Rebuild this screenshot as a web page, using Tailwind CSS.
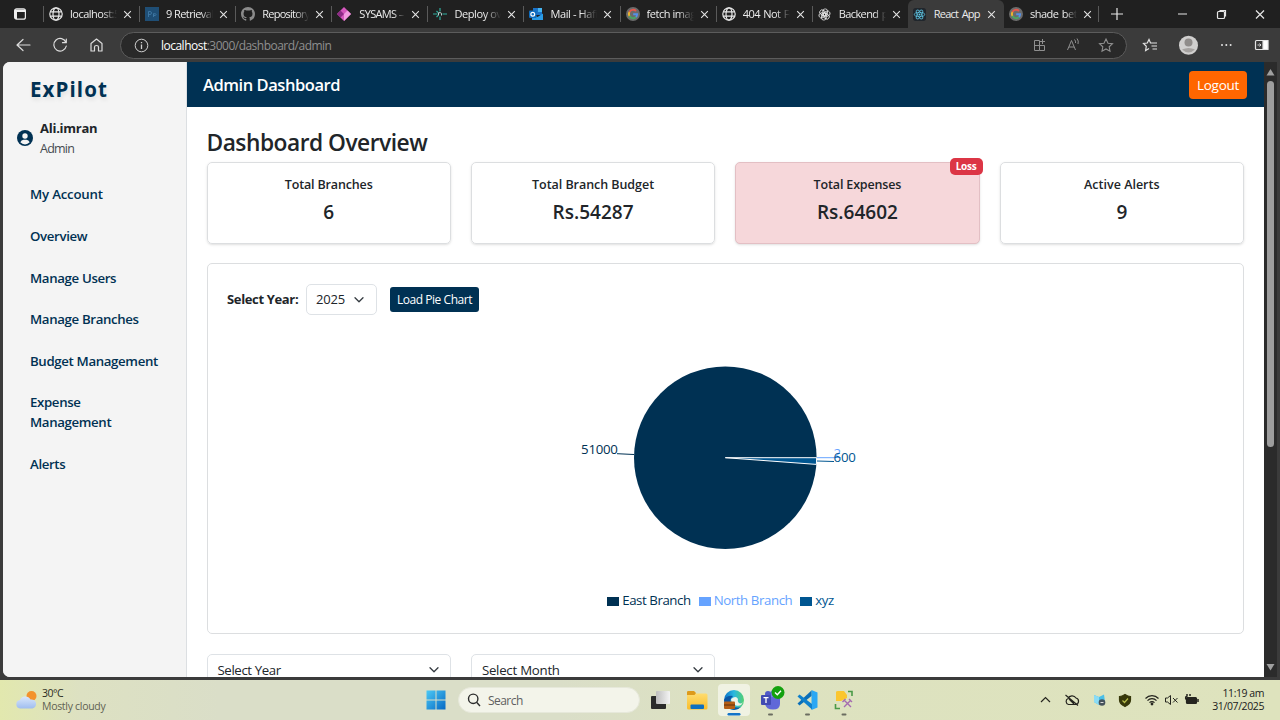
<!DOCTYPE html>
<html lang="en">
<head>
<meta charset="utf-8">
<title>React App</title>
<script src="https://cdn.jsdelivr.net/npm/@tailwindcss/browser@4"></script>
</head>
<body class="w-[1280px] h-[720px] overflow-hidden bg-[#3b3b3b] font-['Open_Sans',sans-serif] text-[#212529] flex flex-col whitespace-nowrap">

<svg class="hidden">
  <defs>
    <symbol id="close" viewBox="0 0 10 10"><path d="M1.3 1.3 8.7 8.7M8.7 1.3 1.3 8.7" stroke="#e4e4e4" stroke-width="1.2" fill="none"/></symbol>
    <symbol id="globe" viewBox="0 0 14 14"><g fill="none" stroke="#e8e8e8" stroke-width="1.2"><circle cx="7" cy="7" r="6.2"/><ellipse cx="7" cy="7" rx="3" ry="6.2"/><path d="M1.3 4.8H12.7M1.3 9.2H12.7"/></g></symbol>
    <symbol id="google" viewBox="0 0 14 14"><circle cx="7" cy="7" r="7" fill="#6b6b6b"/><g fill="none" stroke-width="1.9"><path d="M3.4 5A4.2 4.2 0 0 1 10 4" stroke="#e5574c"/><path d="M3.4 9A4.2 4.2 0 0 1 3.4 5" stroke="#efb52e"/><path d="M10 10A4.2 4.2 0 0 1 3.4 9" stroke="#4aa563"/><path d="M7.2 7.2H11.1A4.2 4.2 0 0 1 10 10" stroke="#5590e8"/></g></symbol>
    <symbol id="chev" viewBox="0 0 12 8"><path d="M2 1.700 6 5.700 10 1.700" fill="none" stroke="#343a40" stroke-width="1.3" stroke-linecap="round" stroke-linejoin="round"/></symbol>
  </defs>
</svg>

<!-- Tab strip -->
<div class="h-7 shrink-0 bg-[#202020] flex items-center text-[11px] text-[#ececec]">
  <div class="w-[43px] shrink-0 pl-[14px]"><svg class="size-3" viewBox="0 0 12 12"><rect x=".6" y=".8" width="10.8" height="10.4" rx="2" fill="none" stroke="#eee" stroke-width="1.2"/><path d="M1 1.5H11V4H1zM1 4H3V11H1z" fill="#eee"/></svg></div>
  <div class="w-[96.100px] h-4 shrink-0 border-l border-[#5a5a5a] pl-[5px] flex items-center"><svg class="size-[14px] shrink-0"><use href="#globe"/></svg><span class="ml-[7px] w-[47px] overflow-hidden tracking-[-0.5px] mask-r-from-70%">localhost:5</span><svg class="size-[9px] ml-[6px] shrink-0"><use href="#close"/></svg></div>
  <div class="w-[96.100px] h-4 shrink-0 border-l border-[#5a5a5a] pl-[5px] flex items-center"><svg class="size-[14px] shrink-0" viewBox="0 0 14 14"><path fill="#1f4e75" d="M0 0h14v14H0z"/><path d="M3.500 10V4.500H5Q6.500 4.500 6.500 6T5 7.500H3.500M8.500 10V6.500M8.500 7Q11 6 11 7.500T8.500 8.500" fill="none" stroke="#3f78a5" stroke-width=".9"/></svg><span class="ml-[7px] w-[47px] overflow-hidden tracking-[-0.6px] mask-r-from-75%">9 Retrieval</span><svg class="size-[9px] ml-[6px] shrink-0"><use href="#close"/></svg></div>
  <div class="w-[96.100px] h-4 shrink-0 border-l border-[#5a5a5a] pl-[5px] flex items-center"><svg class="size-[14px] shrink-0" viewBox="0 0 16 16"><path fill="#8b8b8b" d="M8 0C3.580 0 0 3.580 0 8c0 3.540 2.290 6.530 5.470 7.590.4.070.550-.170.550-.380 0-.190-.010-.820-.010-1.490-2.010.370-2.530-.490-2.690-.940-.090-.230-.480-.940-.820-1.130-.280-.150-.680-.520-.010-.530.630-.010 1.080.580 1.230.820.720 1.210 1.870.870 2.330.660.070-.520.280-.870.510-1.070-1.780-.2-3.640-.890-3.640-3.950 0-.870.310-1.590.820-2.150-.080-.2-.360-1.020.080-2.120 0 0 .670-.210 2.200.820a7.600 7.600 0 0 1 4 0c1.530-1.040 2.200-.820 2.200-.820.440 1.100.160 1.920.080 2.120.510.560.820 1.270.820 2.150 0 3.070-1.870 3.750-3.650 3.950.290.250.540.730.540 1.480 0 1.070-.010 1.930-.010 2.200 0 .210.150.460.550.380A8 8 0 0 0 16 8c0-4.420-3.580-8-8-8z"/></svg><span class="ml-[7px] w-[47px] overflow-hidden tracking-[-0.75px] mask-r-from-70%">Repository</span><svg class="size-[9px] ml-[6px] shrink-0"><use href="#close"/></svg></div>
  <div class="w-[96.100px] h-4 shrink-0 border-l border-[#5a5a5a] pl-[5px] flex items-center"><svg class="size-[14px] shrink-0" viewBox="0 0 14 14"><path fill="#d556bd" d="M7 0 14 7 7 14 0 7z"/><path fill="#8d2a86" d="M7 0 3.500 3.500 7 7 3.500 10.500 0 7z"/><path fill="#f19be0" d="M7 7 10.500 3.500 14 7 7 14z"/></svg><span class="ml-[8px] w-[46px] overflow-hidden tracking-[-0.65px] mask-r-from-75%">SYSAMS – A</span><svg class="size-[9px] ml-[6px] shrink-0"><use href="#close"/></svg></div>
  <div class="w-[96.100px] h-4 shrink-0 border-l border-[#5a5a5a] pl-[5px] flex items-center"><svg class="size-[14px] shrink-0" viewBox="0 0 14 14"><path d="M0 7H4.500M9.500 7H14M7 1V4.500M7 9.500V13M3.500 4 5 5.500M3.500 10 5 8.500" stroke="#2fae9f" stroke-width="1.200"/><path d="M5.500 8.500V5.700H7.300Q8.500 5.700 8.500 6.700V8.500" stroke="#cfe8e4" stroke-width=".9" fill="none"/></svg><span class="ml-[7px] w-[47px] overflow-hidden tracking-[-0.4px] mask-r-from-65%">Deploy ove</span><svg class="size-[9px] ml-[6px] shrink-0"><use href="#close"/></svg></div>
  <div class="w-[96.100px] h-4 shrink-0 border-l border-[#5a5a5a] pl-[5px] flex items-center"><svg class="size-[14px] shrink-0" viewBox="0 0 14 14"><path fill="#1a73c9" d="M4 1h9v7H4z"/><path fill="#46b5f1" d="M9 1h4v4H9z"/><path fill="#2a9be6" d="M3 7 8.500 10 14 6.500V13H3z"/><rect y="3.500" width="7.500" height="7.500" rx="1" fill="#0f6cbd"/><circle cx="3.750" cy="7.250" r="1.900" fill="none" stroke="#fff" stroke-width="1.200"/></svg><span class="ml-[7px] w-[47px] overflow-hidden tracking-[-0.4px] mask-r-from-65%">Mail - Hafi</span><svg class="size-[9px] ml-[6px] shrink-0"><use href="#close"/></svg></div>
  <div class="w-[96.100px] h-4 shrink-0 border-l border-[#5a5a5a] pl-[5px] flex items-center"><svg class="size-[14px] shrink-0"><use href="#google"/></svg><span class="ml-[7px] w-[47px] overflow-hidden tracking-[-0.45px] mask-r-from-65%">fetch imag</span><svg class="size-[9px] ml-[6px] shrink-0"><use href="#close"/></svg></div>
  <div class="w-[96.100px] h-4 shrink-0 border-l border-[#5a5a5a] pl-[5px] flex items-center"><svg class="size-[14px] shrink-0"><use href="#globe"/></svg><span class="ml-[7px] w-[47px] overflow-hidden tracking-[-0.55px] [word-spacing:1px] mask-r-from-70%">404 Not Fo</span><svg class="size-[9px] ml-[6px] shrink-0"><use href="#close"/></svg></div>
  <div class="w-[96.100px] h-4 shrink-0 border-l border-[#5a5a5a] pl-[5px] flex items-center"><svg class="size-[13px] shrink-0" viewBox="-7 -7 14 14"><g fill="none" stroke="#e6e6e6" stroke-width=".9"><rect x="-1.800" y="-6" width="5" height="7.500" rx="2.300"/><rect x="-1.800" y="-6" width="5" height="7.500" rx="2.300" transform="rotate(60)"/><rect x="-1.800" y="-6" width="5" height="7.500" rx="2.300" transform="rotate(120)"/><rect x="-1.800" y="-6" width="5" height="7.500" rx="2.300" transform="rotate(180)"/><rect x="-1.800" y="-6" width="5" height="7.500" rx="2.300" transform="rotate(240)"/><rect x="-1.800" y="-6" width="5" height="7.500" rx="2.300" transform="rotate(300)"/></g></svg><span class="ml-2 w-[47px] overflow-hidden tracking-[-0.6px] [word-spacing:1px] mask-r-from-75%">Backend p</span><svg class="size-[9px] ml-[6px] shrink-0"><use href="#close"/></svg></div>
  <div class="w-[96.100px] h-7 shrink-0 bg-[#3b3b3b] rounded-t-[6px] pl-[5px] flex items-center"><svg class="size-[13px] shrink-0" viewBox="0 0 14 14"><rect width="14" height="14" rx="3" fill="#20262c"/><g fill="none" stroke="#5fc9e8" stroke-width=".8"><ellipse cx="7" cy="7" rx="5.600" ry="2.200"/><ellipse cx="7" cy="7" rx="5.600" ry="2.200" transform="rotate(60 7 7)"/><ellipse cx="7" cy="7" rx="5.600" ry="2.200" transform="rotate(120 7 7)"/></g><circle cx="7" cy="7" r="1" fill="#5fc9e8"/></svg><span class="ml-2 w-[47px] tracking-[-0.8px] [word-spacing:1.500px]">React App</span><svg class="size-[9px] ml-[6px] shrink-0"><use href="#close"/></svg></div>
  <div class="w-[95px] h-4 shrink-0 border-r border-[#5a5a5a] pl-[5px] flex items-center"><svg class="size-[14px] shrink-0"><use href="#google"/></svg><span class="ml-[7px] w-[47px] overflow-hidden tracking-[-0.5px] [word-spacing:1px] mask-r-from-75%">shade betw</span><svg class="size-[9px] ml-[6px] shrink-0"><use href="#close"/></svg></div>
  <svg class="w-[180px] h-7 shrink-0" viewBox="1100 0 180 28" fill="none" stroke="#e6e6e6" stroke-width="1.200"><path d="M1112 14H1124M1118 8V20M1179 14H1188"/><rect x="1218.500" y="11.500" width="7" height="7" rx="1"/><path d="M1220.500 10.500H1226.500V16.500"/><path d="M1257 10.500 1265 18.500M1265 10.500 1257 18.500"/></svg>
</div>

<!-- Toolbar -->
<div class="h-[34px] shrink-0 flex items-center text-[12px]">
  <svg class="w-[120px] h-[34px]" viewBox="0 28 120 34" fill="none" stroke="#dcdcdc" stroke-width="1.200" stroke-linecap="round" stroke-linejoin="round"><path d="M17 45H30M23 39.500 17 45 23 50.500"/><path d="M66 42.500A6.300 6.300 0 1 0 66.300 46M66.300 39V42.700H62.500"/><path d="M91 43.500 96.500 39 102 43.500V51H98.500V47Q98.500 45.500 96.500 45.500T94.500 47V51H91z"/></svg>
  <div class="w-[1007px] h-[27px] rounded-full border border-[#5c5c5c] bg-[#292929] flex items-center">
    <svg class="size-[15px] ml-[13px]" viewBox="0 0 15 15" fill="none" stroke="#cfcfcf"><circle cx="7.500" cy="7.500" r="6.300"/><path d="M7.500 6.500V11M7.500 4V5.300" stroke-width="1.300"/></svg>
    <span class="ml-3 pt-px tracking-[-0.51px] text-[#8f8f8f]"><span class="text-white">localhost</span>:3000/dashboard/admin</span>
    <svg class="w-[96px] h-[25px] ml-auto" viewBox="1030 33 96 25" fill="none" stroke="#8f8f8f"><path d="M1034.500 40.500H1039.500V50.500H1034.500zM1034.500 45.500H1044.500V50.500H1039.500M1042.500 39V44M1040 41.500H1045"/><path d="M1067.500 50 1071.500 40.500 1075.500 50M1069 47H1074"/><path d="M1074.500 39.500Q1076 41 1075.500 43M1077 38.500Q1079 41 1078 44"/><path d="M1106 39 1108 43.200 1112.500 43.700 1109.200 46.800 1110 51.300 1106 49 1102 51.300 1102.800 46.800 1099.500 43.700 1104 43.200z" stroke-width="1.100"/></svg>
  </div>
  <svg class="w-[153px] h-[34px]" viewBox="1127 28 153 34" fill="none" stroke="#e4e4e4" stroke-width="1.200"><path d="M1153.500 43H1150.500L1149 39.500 1147.300 43 1143.500 43.500 1146.300 46.300 1145.600 50.500 1149 48.600M1152.500 43H1157M1151.500 46H1157M1152.500 49H1157"/><circle cx="1188.500" cy="45.300" r="9.500" fill="#d0cfce" stroke="none"/><circle cx="1188.500" cy="42.500" r="4" fill="#8f8c8a" stroke="none"/><path d="M1182 49.500Q1188.500 46.500 1195 49.500 1188.500 55.500 1182 49.500z" fill="#a5a2a0" stroke="none"/><g fill="#e4e4e4" stroke="none"><circle cx="1222" cy="45" r="1"/><circle cx="1226.300" cy="45" r="1"/><circle cx="1230.600" cy="45" r="1"/></g><rect x="1255.500" y="40.500" width="12" height="9" rx="1"/><path d="M1263 40.500H1268V49.500H1263z" fill="#fff"/><path d="M1257.500 45H1261M1259.500 43.500 1261 45 1259.500 46.500" stroke-width=".9"/></svg>
</div>

<!-- Page viewport -->
<div class="h-[615px] shrink-0 ml-[3px] mr-[3px] flex rounded-l-[7px] overflow-hidden bg-white">
  <aside class="w-[184px] shrink-0 bg-[#f4f4f4] border-r border-[#dcdfe2] text-[#003153]">
    <div class="pl-[27px] mt-[13px] h-7 leading-7 text-[20.5px] font-bold tracking-[1.1px] [text-shadow:1px_3px_4px_rgba(0,0,0,0.08)]">ExPilot</div>
    <div class="mt-[15px] ml-[14px] flex items-center">
      <svg class="size-4" viewBox="0 0 16 16"><circle cx="8" cy="8" r="8" fill="#003153"/><circle cx="8" cy="6" r="2.700" fill="#f4f4f4"/><path d="M3.300 12.300Q4.300 9.800 6.500 9.800H9.500Q11.700 9.800 12.700 12.300A6.300 6.300 0 0 1 3.300 12.300z" fill="#f4f4f4"/></svg>
      <div class="ml-[7px] text-[#212529]"><div class="h-5 leading-5 text-[13px] font-bold tracking-[-0.25px]">Ali.imran</div><div class="h-5 leading-[22px] text-[12.500px] tracking-[-0.75px] text-[#444a50]">Admin</div></div>
    </div>
    <nav class="mt-[26.400px] ml-[27px] flex flex-col gap-[21.600px] leading-5 text-[13.250px] tracking-[-0.36px] font-semibold">
      <a class="tracking-[-0.2px]">My Account</a><a>Overview</a><a>Manage Users</a><a>Manage Branches</a><a>Budget Management</a><a>Expense<br>Management</a><a>Alerts</a>
    </nav>
  </aside>

  <div class="w-[1077px] shrink-0 flex flex-col">
    <header class="h-[45px] shrink-0 bg-[#003153] pl-[16px] pr-[17px] flex items-center justify-between text-white">
      <h1 class="pt-[2px] text-[16.500px] font-semibold tracking-[-0.45px]">Admin Dashboard</h1>
      <button class="w-[58px] h-7 rounded-[4px] bg-[#ff6600] pt-[2px] text-[13.500px] tracking-[-0.25px]">Logout</button>
    </header>
    <main class="pl-[19.500px] pr-5 pt-[20px]">
      <h2 class="h-[30px] leading-[32px] text-[22.750px] tracking-[-0.5px] font-semibold">Dashboard Overview</h2>
      <div class="mt-[5px] grid grid-cols-4 gap-5 text-center font-semibold">
        <div class="h-[82px] rounded-[5px] border border-[#dcdee0] shadow-sm pt-3"><div class="h-5 leading-5 text-[12.500px] tracking-[-0.15px]">Total Branches</div><div class="h-7 leading-7 mt-[3px] text-[19px]">6</div></div>
        <div class="h-[82px] rounded-[5px] border border-[#dcdee0] shadow-sm pt-3"><div class="h-5 leading-5 text-[12.500px] tracking-[-0.05px]">Total Branch Budget</div><div class="h-7 leading-7 mt-[3px] text-[19px]">Rs.54287</div></div>
        <div class="h-[82px] rounded-[5px] border border-[#e3bfc4] bg-[#f6d7da] shadow-sm pt-3 relative"><div class="h-5 leading-5 text-[12.500px] tracking-[-0.15px]">Total Expenses</div><div class="h-7 leading-7 mt-[3px] text-[19px]">Rs.64602</div>
          <span class="absolute -top-[5px] -right-[4px] w-[33px] h-[17px] leading-[17px] rounded-[5px] bg-[#dc3545] text-white text-[10px] font-bold tracking-[-0.2px]">Loss</span></div>
        <div class="h-[82px] rounded-[5px] border border-[#dcdee0] shadow-sm pt-3"><div class="h-5 leading-5 text-[12.500px]">Active Alerts</div><div class="h-7 leading-7 mt-[3px] text-[19px]">9</div></div>
      </div>

      <section class="mt-[19px] h-[371px] rounded-[5px] border border-[#dcdee0] pl-[19.500px] pr-5 pt-5">
        <div class="flex items-center">
          <span class="w-[79px] pt-px text-[13px] font-bold tracking-[-0.35px]">Select Year:</span>
          <div class="w-[71px] h-[31px] rounded-[5px] border border-[#dee2e6] pl-[9px] pr-[11px] flex items-center justify-between text-[13px] tracking-[-0.2px]"><span class="pt-px">2025</span><svg class="w-3 h-2"><use href="#chev"/></svg></div>
          <button class="ml-[13px] w-[89px] h-[25px] rounded-[3px] bg-[#003153] text-white text-[12px] tracking-[-0.45px]">Load Pie Chart</button>
        </div>
        <svg class="w-[995px] h-[260px] text-[13.250px]" viewBox="227 315 995 260">
          <circle cx="725.300" cy="457.700" r="91.300" fill="#003153"/>
          <path d="M725.300 457.700H816.600A91.300 91.300 0 0 1 816.360 464.400z" fill="#005691" stroke="#fff"/>
          <path d="M617 453.700 634 454.500" stroke="#003153"/><path d="M817 457.700H834" stroke="#66a3ff"/><path d="M817 461 834 461.500" stroke="#005691"/>
          <text x="617.500" y="454" text-anchor="end" letter-spacing="-.3" fill="#003153">51000</text>
          <text x="833.500" y="458" fill="#66a3ff">2</text>
          <text x="833.500" y="462" letter-spacing="-.2" fill="#005691">600</text>
        </svg>
        <div class="h-5 mt-[16px] ml-[-9px] flex items-center justify-center text-[13.250px] tracking-[-0.42px]">
          <span class="w-[12px] h-[9px] bg-[#003153] mr-[3px]"></span><span class="text-[#003153] mr-2">East Branch</span>
          <span class="w-[12px] h-[9px] bg-[#66a3ff] mr-[3px]"></span><span class="text-[#66a3ff] mr-2">North Branch</span>
          <span class="w-[12px] h-[9px] bg-[#005691] mr-[3px]"></span><span class="text-[#005691]">xyz</span>
        </div>
      </section>

      <div class="mt-5 grid grid-cols-4 gap-5 text-[13.250px] tracking-[-0.4px]">
        <div class="h-[31px] rounded-[5px] border border-[#dee2e6] pl-[10px] pr-[10px] flex items-center justify-between"><span class="pt-[3px]">Select Year</span><svg class="w-3 h-2"><use href="#chev"/></svg></div>
        <div class="h-[31px] rounded-[5px] border border-[#dee2e6] pl-[10px] pr-[10px] flex items-center justify-between"><span class="pt-[3px] tracking-[-0.25px]">Select Month</span><svg class="w-3 h-2"><use href="#chev"/></svg></div>
      </div>
    </main>
  </div>

  <div class="w-[13px] shrink-0 bg-[#2b2b2b] flex flex-col items-center">
    <svg class="w-[9px] h-[7px] mt-[7px]" viewBox="0 0 9 7"><path d="M4.500 0 8.500 6.500H.5z" fill="#a0a0a0"/></svg>
    <div class="mt-[5px] w-[7px] h-[366px] rounded-full bg-[#9d9d9d]"></div>
    <svg class="w-[9px] h-[7px] mt-auto mb-[6px]" viewBox="0 0 9 7"><path d="M4.500 6.500 8.500 0H.5z" fill="#a0a0a0"/></svg>
  </div>
</div>

<!-- Taskbar -->
<div class="h-10 mt-[3px] shrink-0 flex items-center text-[11px] bg-[linear-gradient(90deg,#e2e8ae_0,#dde1c2_80px,#dadec8_220px,#dadec8_560px,#dde2c0_760px,#dee3bd_1280px)]">
  <svg class="w-[22px] h-6 ml-[15px]" viewBox="0 0 22 24"><defs><linearGradient id="cl" x2="0" y2="1"><stop stop-color="#dbe8fb"/><stop offset="1" stop-color="#9fbdf0"/></linearGradient></defs><circle cx="16.500" cy="8" r="5" fill="#f3922b"/><path d="M5 20.500A4.300 4.300 0 0 1 5 12 5.800 5.800 0 0 1 15.500 11.500 4.500 4.500 0 0 1 17.500 20.500z" fill="url(#cl)"/></svg>
  <div class="ml-[5px] w-[384px] text-[10.500px]"><div class="h-[13px] leading-[13px] tracking-[-0.5px] text-[#2b2b22]">30°C</div><div class="h-[13px] leading-[13px] tracking-[-0.3px] text-[#5f6152]">Mostly cloudy</div></div>
  <svg class="size-5 ml-0" viewBox="0 0 20 20"><defs><linearGradient id="wn" x2="1" y2="1"><stop stop-color="#4cc9f5"/><stop offset="1" stop-color="#0568c4"/></linearGradient></defs><path d="M.5.5H9.500V9.500H.5zM10.500.5H19.500V9.500H10.500zM.5 10.500H9.500V19.500H.5zM10.500 10.500H19.500V19.500H10.500z" fill="url(#wn)"/></svg>
  <div class="ml-[12px] w-[182px] h-[26px] rounded-full bg-[#f3f4ea] border border-[#e6e8da] flex items-center"><svg class="size-[14px] ml-2" viewBox="0 0 14 14" fill="none" stroke="#2b2b2b" stroke-width="1.400"><circle cx="6.200" cy="5.800" r="4.700"/><path d="M9.600 9.300 13 13"/></svg><span class="ml-[7px] pt-px text-[12px] tracking-[-0.55px] text-[#606060]">Search</span></div>
  <svg class="w-[220px] h-10" viewBox="640 680 220 40">
    <defs><linearGradient id="fo" x2="0" y2="1"><stop stop-color="#ffe17a"/><stop offset="1" stop-color="#f9bd2b"/></linearGradient><linearGradient id="ed" x2="1" y2="0"><stop stop-color="#0a6fc8"/><stop offset=".5" stop-color="#2bb8df"/><stop offset="1" stop-color="#54d070"/></linearGradient><linearGradient id="gr"><stop stop-color="#bdbdbd"/><stop offset="1" stop-color="#f4f4f4"/></linearGradient></defs>
    <rect x="651" y="696" width="15" height="13" rx="1" fill="#2b2b2b"/><rect x="656" y="691" width="14" height="13" rx="1" fill="url(#gr)"/>
    <path d="M687 693Q687 691 689 691H694L696 693.500H706Q707.500 693.500 707.500 695V708Q707.500 709.500 706 709.500H688.500Q687 709.500 687 708z" fill="url(#fo)"/><path d="M687 694V692Q687 691 688.500 691H694L696 693 694.500 695H687z" fill="#dd9a1b"/><rect x="690.500" y="704.500" width="13.500" height="4.500" rx="1" fill="#0f70c0"/>
    <rect x="718" y="684" width="32" height="32" rx="4" fill="#f0f2e3"/>
    <circle cx="734" cy="700" r="10" fill="url(#ed)"/><path d="M724 700Q727 695 733 696 729 699 731 704 734 709 741 707 738 710 734 710 725 709 724 700z" fill="#0b56a4"/><path d="M731 699Q736 695 738 699 737 702 740 703.500 744 703 743 702 741 707 736 705.500 731 704 731 699z" fill="#eef4ea"/><rect x="724" y="701.500" width="11" height="7.500" rx="1" fill="#b55f16"/><path d="M724 705H735" stroke="#623109"/>
    <rect x="727.500" y="713" width="13" height="2.500" rx="1.200" fill="#1474c8"/>
    <circle cx="774" cy="694" r="4" fill="#7480e0"/><circle cx="768" cy="694" r="3" fill="#5059c9"/><path d="M765 697H780V704Q780 709.500 773 709.500 766 709.500 765 704z" fill="#6068d8"/><rect x="761" y="695" width="10" height="10" rx="1" fill="#414bb2"/><path d="M763.500 697.700H768.500M766 697.700V703" stroke="#fff" stroke-width="1.300"/>
    <circle cx="778" cy="692.500" r="6.500" fill="#13a10e"/><path d="M775 692.500 777.300 694.800 781 690.800" stroke="#fff" stroke-width="1.400" fill="none"/>
    <path d="M811.500 690 817.500 692.500V707.500L811.500 710z" fill="#2aa7f4"/><path d="M797.500 703.500 811.500 690.500V696L799.500 705.500z" fill="#0a6fb8"/><path d="M797.500 696.500 799.500 694.500 812 704V709.500z" fill="#0f80cc"/>
    <path d="M836 692Q836 691 838 691H844L847 695V698L841 701H836z" fill="#fbc62f"/><path d="M848 691.500H852V696M840 708.500H835.500V704" stroke="#4a9a47" stroke-width="1.600" fill="none"/><path d="M844 700 851 707M851 700 844 707M842.500 702 845.500 699M849 699 852 702" stroke="#a56bb0" stroke-width="1.400"/>
    <g fill="#6b6d60"><rect x="768" y="713.500" width="5" height="2" rx="1"/><rect x="805" y="713.500" width="5" height="2" rx="1"/><rect x="841.500" y="713.500" width="5" height="2" rx="1"/></g>
  </svg>
  <svg class="w-[170px] h-10 ml-auto" viewBox="1034 680 170 40" fill="none" stroke="#25251f" stroke-width="1.200">
    <path d="M1041 702 1045.500 697.500 1050 702"/>
    <path d="M1068.500 704.500A3.200 3.200 0 0 1 1068 698.500 4.500 4.500 0 0 1 1076 698 3.300 3.300 0 0 1 1075.500 704.500zM1065.500 695 1078 705.500M1069 699 1074 704"/>
    <g stroke="none"><path d="M1094 695 1099 697 1104 694.500 1105 702 1099 705 1094 702z" fill="#49bfe8"/><path d="M1094 695 1099 697V705L1094 702z" fill="#8bdcf5"/><circle cx="1102" cy="702.500" r="3.300" fill="#46535c"/><rect x="1100.500" y="702" width="3" height="1" fill="#ddd"/></g>
    <path d="M1125 694.500Q1128 696.500 1130.500 696.500V700Q1130.500 704 1125 706.500 1119.500 704 1119.500 700V696.500Q1122 696.500 1125 694.500z" fill="#37380a" stroke="#37380a"/><path d="M1122.500 700.500 1124.500 702.500 1128 698.500" stroke="#b6bd4a"/>
    <g transform="translate(1152 700)"><path d="M-6.500-1.500A9 9 0 0 1 6.500-1.500M-4.500.7A6 6 0 0 1 4.500.7M-2.500 2.700A3.500 3.500 0 0 1 2.500 2.700"/><circle cy="4" r=".8" fill="#25251f"/></g>
    <path d="M1165.500 698H1167.500L1170.500 695.500V704.500L1167.500 702H1165.500zM1173 698 1177.500 702.500M1177.500 698 1173 702.500" stroke-width="1"/>
    <rect x="1186.500" y="697.500" width="10" height="6" rx="1" fill="#25251f"/><path d="M1198 699V702M1186 699.500Q1185 697 1187 696V694M1190 694V696" stroke-width="1.500"/>
  </svg>
  <div class="w-[60px] mr-4 text-right text-[10.500px] text-[#20201a]"><div class="h-[13px] leading-[13px] tracking-[-0.45px]">11:19 am</div><div class="h-[13px] leading-[13px] tracking-[-0.4px]">31/07/2025</div></div>
</div>
</body>
</html>
